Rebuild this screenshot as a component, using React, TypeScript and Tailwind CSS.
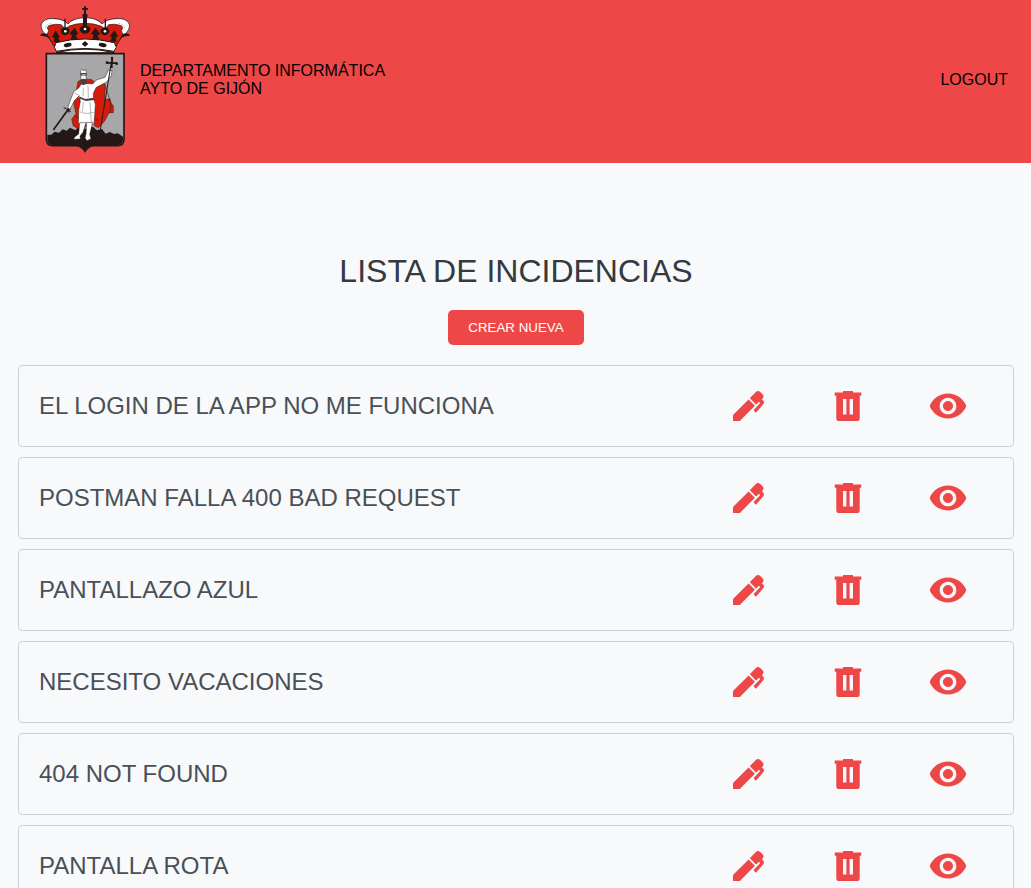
import React from "react";

const incidents = [
  "EL LOGIN DE LA APP NO ME FUNCIONA",
  "POSTMAN FALLA 400 BAD REQUEST",
  "PANTALLAZO AZUL",
  "NECESITO VACACIONES",
  "404 NOT FOUND",
  "PANTALLA ROTA",
];

function Crest() {
  return (
    <svg viewBox="0 0 312 480" className="h-[160px] w-[104px] shrink-0" aria-label="Escudo de Gijón">
      {/* crown */}
      <g stroke="#231815" strokeWidth="3" strokeLinejoin="round">
        <path d="M40 106Q17 86 24 70Q36 52 62 57Q86 58 101 73Q112 57 153 55Q194 57 205 73Q220 58 244 57Q272 52 284 70Q291 86 266 106L246 138Q153 108 60 138Z" fill="#d51b0b" />
        <path d="M38 106Q18 90 22 72Q32 53 60 56Q88 57 102 72Q116 54 153 53Q190 54 204 72Q218 57 246 56Q276 53 286 72Q290 90 268 106L262 92Q270 82 262 77Q240 70 224 74L213 87L202 79Q182 70 153 70Q124 70 104 79L93 87L82 74Q66 70 44 77Q36 82 44 92Z" fill="#fff" strokeWidth="2" />
        <path d="M61 142L66 128Q153 106 241 128L247 142L240 154Q153 137 67 154Z" fill="#fff" />
        <path d="M66 158Q153 137 241 158Z" fill="#fff" />
      </g>
      <path d="M34 84Q34 72 52 71M272 84Q272 72 254 71" fill="none" stroke="#231815" strokeWidth="2" strokeDasharray="2 5" />
      <g fill="#231815">
        <path d="M150 19h6v5h6v5h-6v12q8 3 3 10v27q11 2 10 11q-4 12-16 12q-12 0-16-12q-1-9 10-11V51q-5-7 3-10V29h-6v-5h6Z" />
        <path d="M91 82V56h4v26q11 2 12 12q-4 12-14 12q-12-2-13-12q1-10 11-12ZM212 82V56h4v26q8 3 10 12q-3 11-14 12q-11-1-13-12q1-9 13-12Z" />
        <path d="M65 91l9 15 4 5-6 3 8 12H58l4-11-8-5ZM241 91l11 17-7 5 3 12h-22l8-11-6-6ZM122 83l11 19-8 3 7 15h-22l4-14-8-5ZM184 83l15 19-8 4 5 14h-22l5-15-8-4Z" />
        <path d="M17 107q8-11 22-5l10 14q-15-10-32-9ZM289 107q-8-11-22-5l-10 14q15-10 32-9Z" />
        <ellipse cx="101" cy="135" rx="12" ry="6" transform="rotate(-12 101 135)" />
        <ellipse cx="206" cy="135" rx="12" ry="6" transform="rotate(12 206 135)" />
        <path d="M153 123l10 9-10 8-10-8Z" />
      </g>
      <g fill="#fff">
        <circle cx="94" cy="94" r="4" /><circle cx="153" cy="87" r="4" /><circle cx="213" cy="94" r="4" />
      </g>
      {/* shield */}
      <path d="M37 161H270V418Q270 437 250 437H176Q160 441 153 454Q146 441 130 437H57Q37 437 37 418Z" fill="#a7a7a9" stroke="#231815" strokeWidth="5" />
      <path d="M40 404L52 404 62 395 75 398 86 388 98 392 108 383 124 391 134 380 153 386 177 380 188 391 204 387 215 401 228 396 240 402 251 400 267 410V420Q267 435 250 435H176Q159 440 153 452Q147 440 130 435H57Q40 435 40 420Z" fill="#231815" />
      {/* cape */}
      <path d="M132 245Q143 234 174 239L185 250 207 236 214 263 211 300 228 296 231 309 238 318 238 338 225 338 212 363 193 383 184 379 176 367 140 389 118 378 113 358 126 341 119 309 127 272Z" fill="#d51b0b" stroke="#231815" strokeWidth="1.5" />
      <path d="M213 252L231 314L228 337M121 348L145 358M180 355L194 362" fill="none" stroke="#231815" strokeWidth="1.5" />
      {/* king */}
      <g fill="#fff" stroke="#231815" strokeWidth="1.5" strokeLinejoin="round">
        <path d="M135 263Q141 247 155 251L177 251 187 240 213 232 223 210 234 212 232 227 218 246 187 262 178 280 179 296 184 312 183 333 180 372H133L134 330 139 304 135 288 122 301 107 329 100 327 110 298 119 275Z" />
        <path d="M137 368H156L147 397 138 408 139 417 119 418 122 411 134 402ZM158 367H176L167 403 171 416 159 422 153 414 156 403Z" />
        <path d="M140 224Q149 219 157 224L156 240 149 247 141 240ZM140 213L145 208 149 213 154 208 157 216 155 227H141Z" />
      </g>
      <path d="M139 240Q149 233 158 240L158 251 147 256 139 248ZM139 219H157V223H139ZM138 290L154 297 178 293 182 300 156 303 138 296ZM102 323L110 328 105 339 99 334Z" fill="#494241" />
      <path d="M148 263L147 289M162 257L163 292M148 305L145 335M168 306L172 370M137 335Q157 345 181 336M122 280L139 287" fill="none" stroke="#77706d" strokeWidth="1.5" />
      <path d="M104 326L58 390" stroke="#231815" strokeWidth="5" />
      <path d="M89 322L110 335M234 175L199 389" fill="none" stroke="#231815" strokeWidth="3" />
      <path d="M232 172h5v15h12v5h-13v12h-5v-13h-12v-5h13Z" fill="#231815" />
      <g fill="#231815"><circle cx="234" cy="174" r="4" /><circle cx="219" cy="188" r="4" /><circle cx="248" cy="191" r="4" /></g>
    </svg>
  );
}

function EditIcon() {
  return (
    <svg viewBox="0 0 40 40" className="size-10" fill="currentColor">
      <path d="M5 35V29L20.6 13.4L26.9 19.7L11.8 35Z" />
      <path d="M21.8 12.2L27.8 6Q30 4 32.3 6L35 8.8Q36.2 10.7 34.8 12.3L33.9 13.3L35.1 14.6Q36.8 16.4 35.2 18.3L28 26.7L25.5 24.3L32.3 17L31 15.8L28.1 18.5Z" />
    </svg>
  );
}

function DeleteIcon() {
  return (
    <svg viewBox="0 0 40 40" className="size-10" fill="currentColor">
      <path d="M6.7 6.6H15V5H25V6.6H33.3V9.8H31.7V32.2Q31.7 35 28.9 35H11.1Q8.3 35 8.3 32.2V9.8H6.7ZM15 13V28.4H18.4V13ZM21.6 13V28.4H25V13Z" fillRule="evenodd" />
    </svg>
  );
}

function ViewIcon() {
  return (
    <svg viewBox="0 0 24 24" className="size-10" fill="currentColor">
      <path d="M12 4.5C7 4.5 2.73 7.61 1 12c1.73 4.39 6 7.5 11 7.5s9.27-3.11 11-7.5c-1.73-4.39-6-7.5-11-7.5zM12 17c-2.76 0-5-2.24-5-5s2.24-5 5-5 5 2.24 5 5-2.24 5-5 5zm0-8c-1.66 0-3 1.34-3 3s1.34 3 3 3 3-1.34 3-3-1.34-3-3-3z" />
    </svg>
  );
}

export default function App() {
  return (
    <div className="h-[888px] overflow-hidden bg-[#f8f9fb] font-['Liberation_Sans',Arial,sans-serif]">
      <header className="flex h-[163px] items-start justify-between bg-[#ed4747] pr-[23px] pl-[34px] text-base leading-[18px] text-black">
        <div className="flex">
          <Crest />
          <p className="mt-[62px] ml-[2px]">
            DEPARTAMENTO INFORMÁTICA
            <br />
            AYTO DE GIJÓN
          </p>
        </div>
        <a className="mt-[71px]">LOGOUT</a>
      </header>
      <main className="flex flex-col items-center px-[18px] pt-[90px]">
        <h1 className="pl-px text-[32px] leading-[37px] text-[#343a40]">LISTA DE INCIDENCIAS</h1>
        <button className="mt-5 h-[35px] w-[136px] rounded-[5px] bg-[#ed4747] pl-px text-[13.333px] text-white">
          CREAR NUEVA
        </button>
        <ul className="mt-5 mr-[-1px] flex w-[996px] flex-col gap-2.5">
          {incidents.map((title) => (
            <li key={title} className="flex h-[82px] items-center justify-between rounded-[4px] border border-[#ced1da] pr-[45px] pl-5">
              <h2 className="text-2xl leading-7 text-[#495057]">{title}</h2>
              <div className="flex gap-[60px] text-[#ed4747]">
                <EditIcon />
                <DeleteIcon />
                <ViewIcon />
              </div>
            </li>
          ))}
        </ul>
      </main>
    </div>
  );
}
